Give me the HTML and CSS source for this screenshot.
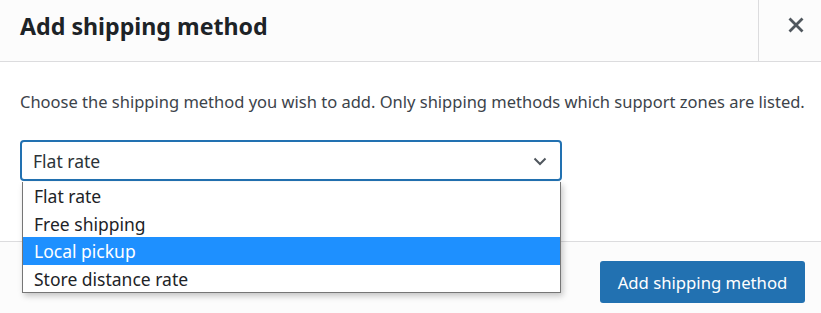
FILE: index.html
```html
<!DOCTYPE html>
<html>
<head>
<meta charset="utf-8">
<link rel="stylesheet" href="styles.css">
</head>
<body>
<div class="modal">
  <header class="modal-header">
    <h1 class="modal-title">Add shipping method</h1>
    <button class="modal-close" aria-label="Close">
      <svg width="16" height="16" viewBox="0 0 16 16"><path d="M1.5 1.5 L14.5 14.5 M14.5 1.5 L1.5 14.5" stroke="#50575e" stroke-width="2.8" fill="none"/></svg>
    </button>
  </header>
  <div class="modal-body">
    <p class="desc">Choose the shipping method you wish to add. Only shipping methods which support zones are listed.</p>
    <div class="select-wrap">
      <div class="select">
        <span class="select-value">Flat rate</span>
        <svg class="chevron" width="16" height="16" viewBox="0 0 16 16"><path d="M2.5 5.5 L8 11 L13.5 5.5" stroke="#50575e" stroke-width="2" fill="none"/></svg>
      </div>
      <ul class="options">
        <li class="option">Flat rate</li>
        <li class="option">Free shipping</li>
        <li class="option active">Local pickup</li>
        <li class="option">Store distance rate</li>
      </ul>
    </div>
  </div>
  <footer class="modal-footer">
    <button class="btn-primary">Add shipping method</button>
  </footer>
</div>
</body>
</html>
```
FILE: styles.css
```css
* { box-sizing: border-box; }
html, body { margin: 0; padding: 0; }
body {
  font-family: "Noto Sans", "Open Sans", sans-serif;
  color: #2c3338;
  background: #fff;
  width: 821px;
  height: 313px;
  overflow: hidden;
}
.modal {
  display: flex;
  flex-direction: column;
  height: 313px;
}
.modal-header {
  display: flex;
  height: 62px;
  background: #fcfcfc;
  border-bottom: 1px solid #dcdcde;
}
.modal-title {
  flex: 1;
  margin: 0;
  padding: 12px 20px 0;
  font-size: 23.2px;
  font-weight: 700;
  color: #1d2327;
  line-height: 28px;
}
.modal-close {
  width: 63px;
  border: 0;
  border-left: 1px solid #dcdcde;
  background: transparent;
  display: flex;
  align-items: center;
  justify-content: center;
  padding: 0 0 12px 12px;
}
.modal-body {
  height: 179px;
  padding: 28px 20px 0;
  background: #fff;
}
.desc {
  margin: 0;
  font-size: 16.5px;
  line-height: 24px;
  color: #3c434a;
  white-space: nowrap;
}
.select-wrap {
  position: relative;
  width: 542px;
  margin-top: 26px;
}
.select {
  height: 41px;
  border: 2px solid #2271b1;
  border-radius: 4px;
  display: flex;
  align-items: center;
  justify-content: space-between;
  padding: 0 12px 0 11px;
  font-size: 17.5px;
  color: #2c3338;
}
.chevron { margin-top: 1px; }
.options {
  position: absolute;
  left: 2px;
  top: 42px;
  width: 539px;
  margin: 0;
  padding: 0;
  list-style: none;
  background: #fff;
  border: 1px solid #767676;
  border-top: 0;
  box-shadow: 2px 3px 6px rgba(0,0,0,0.22);
  z-index: 5;
}
.option {
  height: 27.5px;
  line-height: 29px;
  padding-left: 11px;
  font-size: 17.5px;
  color: #1d2327;
}
.option.active {
  background: #1e90ff;
  color: #fff;
}
.modal-footer {
  flex: 1;
  background: #fcfcfc;
  border-top: 1px solid #dcdcde;
  display: flex;
  justify-content: flex-end;
  align-items: flex-start;
  padding: 19px 16px 0 0;
}
.btn-primary {
  width: 205px;
  height: 42px;
  background: #2271b1;
  border: 0;
  border-radius: 3px;
  color: #fff;
  font-family: inherit;
  font-size: 16.7px;
}
```
